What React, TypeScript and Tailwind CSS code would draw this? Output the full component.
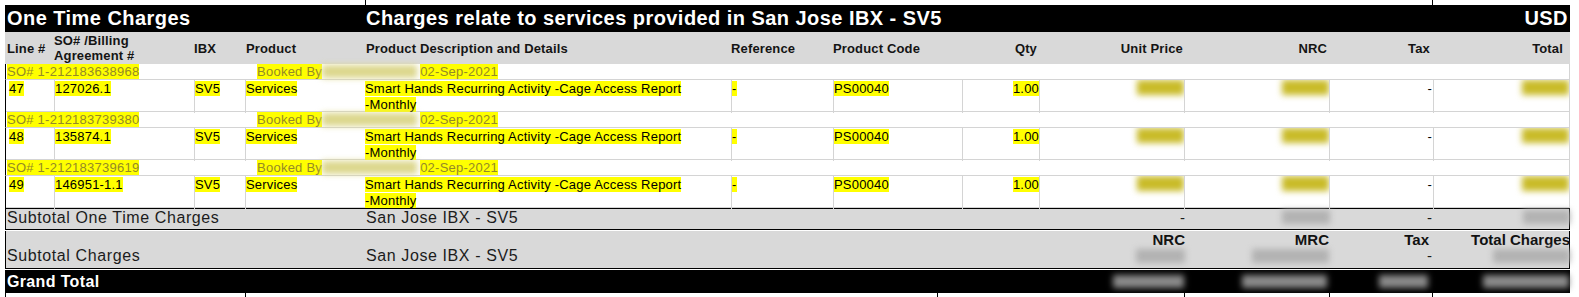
import React from "react";

const COLS =
  "grid grid-cols-[49px_140px_51px_120px_366px_102px_129px_77px_145px_145px_104px_136px]";

const Hl = ({ children }: { children: React.ReactNode }) => (
  <span className="bg-[#ffff00]">{children}</span>
);

const YBlur = ({ w }: { w: string }) => (
  <div className={`${w} h-[15px] ml-auto bg-[#c9bb28] blur-[3px]`} />
);

const GBlur = ({ w }: { w: string }) => (
  <div className={`${w} h-[14px] ml-auto bg-[#b2b2b2] blur-[3px]`} />
);

const KBlur = ({ w }: { w: string }) => (
  <div className={`${w} h-[13px] ml-auto bg-[#8a8a8a] blur-[3px]`} />
);

const rows = [
  { so: "SO# 1-212183638968", line: "47", ba: "127026.1" },
  { so: "SO# 1-212183739380", line: "48", ba: "135874.1" },
  { so: "SO# 1-212183739619", line: "49", ba: "146951-1.1" },
];

function SoRow({ so }: { so: string }) {
  return (
    <div className="flex h-[16px] border-l border-l-black border-r border-r-[#d4d4d4] border-b border-b-[#d4d4d4] text-[13px] tracking-[0.25px] leading-[16px] text-[#958a26] whitespace-nowrap">
      <div className="w-[251px] pl-[1px] shrink-0">
        <Hl>{so}</Hl>
      </div>
      <Hl>Booked By</Hl>
      <div className="w-[95px] h-[13px] mt-[1px] bg-[#dcd78c] blur-[3px] shrink-0" />
      <div className="ml-[3px]">
        <Hl>02-Sep-2021</Hl>
      </div>
    </div>
  );
}

function DataRow({ line, ba }: { line: string; ba: string }) {
  const cell = "border-l border-[#d4d4d4] overflow-hidden whitespace-nowrap";
  return (
    <div
      className={`${COLS} h-[32px] border-r border-r-[#d4d4d4] border-b border-b-[#d4d4d4] text-[13px] tracking-[0.2px] leading-[16px] text-black`}
    >
      <div className="border-l border-black pl-[3px] pt-[1px]">
        <Hl>{line}</Hl>
      </div>
      <div className={`${cell} pt-[1px]`}>
        <Hl>{ba}</Hl>
      </div>
      <div className={`${cell} pt-[1px]`}>
        <Hl>SV5</Hl>
      </div>
      <div className={`${cell} pt-[1px]`}>
        <Hl>Services</Hl>
      </div>
      <div className="pt-[1px] whitespace-nowrap">
        <Hl>Smart Hands Recurring Activity -Cage Access Report</Hl>
        <br />
        <Hl>-Monthly</Hl>
      </div>
      <div className={`${cell} pt-[1px]`}>
        <Hl>-</Hl>
      </div>
      <div className={`${cell} pt-[1px]`}>
        <Hl>PS00040</Hl>
      </div>
      <div className={`${cell} pt-[1px] text-right`}>
        <Hl>1.00</Hl>
      </div>
      <div className={`${cell} flex items-start`}>
        <YBlur w="w-[47px]" />
      </div>
      <div className={`${cell} flex items-start`}>
        <YBlur w="w-[47px]" />
      </div>
      <div className={`${cell} pt-[1px] text-right pr-[1px]`}>-</div>
      <div className={`${cell} flex items-start`}>
        <YBlur w="w-[47px]" />
      </div>
    </div>
  );
}

export default function App() {
  return (
    <div className="w-[1579px] h-[297px] bg-white overflow-hidden font-['Liberation_Sans',Arial,sans-serif]">
      {/* top ticks */}
      <div className="flex h-[5px]">
        <div className="w-[365px] shrink-0" />
        <div className="w-[1067px] shrink-0 border-l border-black" />
        <div className="w-[1px] shrink-0 border-l border-black" />
      </div>

      <div className="ml-[5px] w-[1565px]">
        {/* title bar */}
        <div
          className={`${COLS} h-[27px] bg-black text-white font-bold text-[20px] tracking-[0.45px] leading-[20px] pt-[3px]`}
        >
          <div className="col-span-4 pl-[2px] whitespace-nowrap">One Time Charges</div>
          <div className="col-span-7 pl-[1px] whitespace-nowrap">
            Charges relate to services provided in San Jose IBX - SV5
          </div>
          <div className="text-right pr-[1px]">USD</div>
        </div>

        {/* header */}
        <div
          className={`${COLS} h-[32px] bg-[#d9d9d9] items-center text-[13px] tracking-[0.15px] font-bold leading-[15px] text-[#141414]`}
        >
          <div className="pl-[2px] whitespace-nowrap">Line #</div>
          <div>
            SO# /Billing
            <br />
            Agreement #
          </div>
          <div>IBX</div>
          <div className="pl-[1px]">Product</div>
          <div className="pl-[1px] whitespace-nowrap">Product Description and Details</div>
          <div>Reference</div>
          <div>Product Code</div>
          <div className="text-right pr-[2px]">Qty</div>
          <div className="text-right pr-[1px]">Unit Price</div>
          <div className="text-right pr-[2px]">NRC</div>
          <div className="text-right pr-[3px]">Tax</div>
          <div className="text-right pr-[6px]">Total</div>
        </div>

        {rows.map((r) => (
          <React.Fragment key={r.line}>
            <SoRow so={r.so} />
            <DataRow line={r.line} ba={r.ba} />
          </React.Fragment>
        ))}

        {/* subtotal one time charges */}
        <div
          className={`${COLS} h-[22px] bg-[#d9d9d9] border border-black text-[16px] tracking-[0.6px] leading-[16px] text-[#1c1c1c]`}
        >
          <div className="col-span-4 pl-[1px] pt-[1px] whitespace-nowrap">
            Subtotal One Time Charges
          </div>
          <div className="col-span-4 pt-[1px] whitespace-nowrap">San Jose IBX - SV5</div>
          <div className="text-right pt-[1px] tracking-normal text-[15px]">-</div>
          <div className="flex items-start pt-[1px]">
            <GBlur w="w-[48px]" />
          </div>
          <div className="text-right pr-[2px] pt-[1px] tracking-normal text-[15px]">-</div>
          <div className="flex items-start pt-[1px]">
            <GBlur w="w-[47px]" />
          </div>
        </div>

        {/* subtotal charges */}
        <div
          className={`${COLS} mt-[1px] h-[38px] bg-[#d9d9d9] border-x border-b border-black text-[16px] tracking-[0.6px] leading-[16px] text-[#1c1c1c] pt-[1px]`}
        >
          <div className="col-span-4 pl-[1px] pt-[16px] whitespace-nowrap">Subtotal Charges</div>
          <div className="col-span-4 pt-[16px] whitespace-nowrap">San Jose IBX - SV5</div>
          <div className="flex flex-col items-end tracking-normal">
            <div className="font-bold text-[15px] text-[#111] leading-[16px]">NRC</div>
            <div className="mt-[1px] w-[49px] h-[14px] bg-[#b2b2b2] blur-[3px]" />
          </div>
          <div className="flex flex-col items-end pr-[1px] tracking-normal">
            <div className="font-bold text-[15px] text-[#111] leading-[16px]">MRC</div>
            <div className="mt-[1px] w-[77px] h-[14px] bg-[#b2b2b2] blur-[3px]" />
          </div>
          <div className="flex flex-col items-end tracking-normal">
            <div className="font-bold text-[15px] text-[#111] leading-[16px] pr-[5px]">Tax</div>
            <div className="pr-[2px] leading-[16px] text-[15px]">-</div>
          </div>
          <div className="flex flex-col items-end tracking-normal">
            <div className="font-bold text-[15px] text-[#111] leading-[16px] whitespace-nowrap">
              Total Charges
            </div>
            <div className="mt-[1px] w-[77px] h-[14px] bg-[#b2b2b2] blur-[3px]" />
          </div>
        </div>

        {/* grand total */}
        <div
          className={`${COLS} mt-[1px] h-[23px] bg-black text-white items-center`}
        >
          <div className="col-span-8 pl-[2px] font-bold text-[16px] tracking-[0.35px] leading-[18px]">
            Grand Total
          </div>
          <div className="flex items-center">
            <KBlur w="w-[71px]" />
          </div>
          <div className="flex items-center pr-[2px]">
            <KBlur w="w-[85px]" />
          </div>
          <div className="flex items-center pr-[5px]">
            <KBlur w="w-[49px]" />
          </div>
          <div className="flex items-center">
            <KBlur w="w-[86px]" />
          </div>
        </div>
      </div>

      {/* bottom ticks */}
      <div className="flex h-[4px]">
        <div className="w-[5px] shrink-0" />
        <div className="w-[240px] shrink-0 border-l border-black" />
        <div className="w-[692px] shrink-0 border-l border-black" />
        <div className="w-[247px] shrink-0 border-l border-black" />
        <div className="w-[145px] shrink-0 border-l border-black" />
        <div className="w-[103px] shrink-0 border-l border-black" />
        <div className="w-[1px] shrink-0 border-l border-black" />
      </div>
    </div>
  );
}
